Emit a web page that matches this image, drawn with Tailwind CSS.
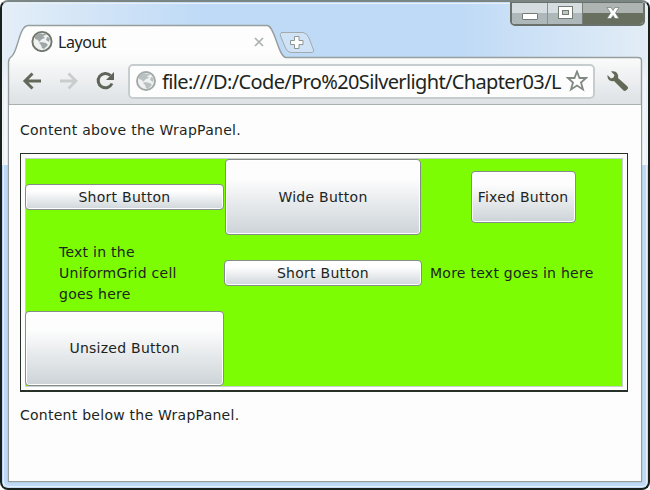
<!DOCTYPE html>
<html lang="en"><head><meta charset="utf-8"><title>Layout</title>
<script src="https://cdn.jsdelivr.net/npm/@tailwindcss/browser@4"></script></head>
<body class="w-[650px] h-[490px] overflow-hidden bg-white">
<div class="relative w-[650px] h-[490px] flex flex-col rounded-[8px] border-2 border-[#18211c] border-t-[#7b8583] bg-[#bfdaf6] overflow-hidden font-['DejaVu_Sans',Verdana,sans-serif] text-[14px] text-[#1c251e] px-[7px] pb-[7px]">
  <svg class="absolute -left-[2px] -top-[2px]" width="650" height="490" viewBox="0 0 650 490" fill="none">
    <defs>
      <linearGradient id="glassL" x1="0" y1="0" x2="1" y2="0"><stop stop-color="#e4eef8"/><stop offset="1" stop-color="#bfdaf6"/></linearGradient>
      <linearGradient id="glassR" x1="0" y1="0" x2="1" y2="0"><stop stop-color="#bfdaf6"/><stop offset="1" stop-color="#e3edf6"/></linearGradient>
      <linearGradient id="side" x1="0" y1="0" x2="0" y2="1"><stop stop-color="#e4edf5"/><stop offset=".2" stop-color="#f0f4f8"/><stop offset="1" stop-color="#f4f7fa"/></linearGradient>
      <linearGradient id="bar" x1="0" y1="26" x2="0" y2="105" gradientUnits="userSpaceOnUse"><stop offset=".35" stop-color="#fdfdfd"/><stop offset="1" stop-color="#dde1e4"/></linearGradient>
    </defs>
    <rect width="200" height="60" fill="url(#glassL)"/>
    <rect x="460" width="190" height="60" fill="url(#glassR)"/>
    <rect y="60" width="9" height="105" fill="url(#side)"/>
    <rect x="641" y="60" width="9" height="105" fill="url(#side)"/>
    <path d="M3.500 488V8Q3.500 3.500 9 3.500H641Q646.500 3.500 646.500 8V482Q646.500 486.500 641 486.500H9Q3.500 486.500 3.500 481" stroke="#e9eff4"/>
    <path d="M8.500 481.500V62Q8.500 58.500 12 56C18 51 19 26 28 25.500H267C275 25.500 278 57 286 57.500H638Q641.500 57.500 641.500 61V481.500Z" fill="url(#bar)" stroke="#979f9e" stroke-width="1.400"/>
    <path d="M281.500 32.500H303Q307 33 309 38L313.500 50Q314.500 52.500 311 52.500H291Q287.500 52.500 285.500 48L280.500 36Q279.500 32.500 283 32.500Z" fill="#cfe2f6" stroke="#a2aaab"/>
    <path d="M294.500 36.500H299V40.500H303V44.500H299V48.500H294.500V44.500H290.500V40.500H294.500Z" fill="#fff" stroke="#8f9796"/>
  </svg>
  <header class="relative flex flex-col h-[103px] shrink-0">
    <div class="flex h-[55px] pt-[28px] pl-[22px]">
      <svg width="22" height="22" viewBox="0 0 22 22"><circle cx="11" cy="11.500" r="9.600" fill="#f0f2f2" stroke="#70776c" stroke-width="1.900"/><path d="M4 6L8 3L12 4L14 3L15 5L12 6L14 8L11 9L8 12L7 10L4 9ZM10 12L15 13L17 15L13 19L11 18L10 15L8 13ZM16 7L19 8L18 12L15 10Z" fill="#9ea7a6"/></svg>
      <span class="ml-[5px] mt-px w-[196px] h-[22px] leading-[22px] text-[16px] tracking-[-0.450px] font-['Noto_Sans',sans-serif]">Layout</span>
      <svg class="mt-[7px]" width="10" height="10" viewBox="0 0 10 10"><path d="M1 1L9 9M9 1L1 9" stroke="#a9b1b1" stroke-width="1.700"/></svg>
    </div>
    <div class="flex items-center h-[48px] shrink-0 pt-px pl-[13px] border-b border-[#a9b0b0]">
      <svg width="20" height="20" viewBox="0 0 20 20" fill="none" stroke="#62695b" stroke-width="3"><path d="M2.500 10H19M10.500 2.500L3 10L10.500 17.500"/></svg>
      <svg class="ml-[17px]" width="20" height="20" viewBox="0 0 20 20" fill="none" stroke="#c8cece" stroke-width="2.800"><path d="M1 10H17.500M9.500 2.500L17 10L9.500 17.500"/></svg>
      <svg class="ml-[16px]" width="20" height="20" viewBox="0 0 20 20" fill="none"><path d="M15.500 4.500A7.200 7.200 0 1 0 17 12.500" stroke="#5e6558" stroke-width="3"/><path d="M19 1V9H11Z" fill="#5e6558"/></svg>
      <div class="ml-[13px] w-[467px] h-[35px] flex items-center border-2 border-[#c6cdcf] rounded-[5px] bg-[#fdfdfd]">
        <svg class="ml-[5px]" width="22" height="22" viewBox="0 0 22 22"><circle cx="11" cy="11" r="9" fill="#f0f2f2" stroke="#a2a9a8" stroke-width="1.900"/><path d="M4 6L8 3L12 4L14 3L15 5L12 6L14 8L11 9L8 12L7 10L4 9ZM10 12L15 13L17 15L13 19L11 18L10 15L8 13ZM16 7L19 8L18 12L15 10Z" fill="#bac1c2"/></svg>
        <span class="ml-[5px] w-[402px] shrink-0 whitespace-nowrap leading-[29px] text-[20px] tracking-[-0.640px] font-['Noto_Sans',sans-serif]">file:///D:/Code/Pro%20Silverlight/Chapter03/L</span>
        <svg class="ml-[2px] shrink-0" width="22" height="22" viewBox="0 0 22 22"><path d="M11 1.500L13.500 8H20L15 12.500L17 19.500L11 15.500L5 19.500L7 12.500L2 8H8.500Z" fill="#fdfdfd" stroke="#818a82" stroke-width="1.800"/></svg>
      </div>
      <svg class="ml-[12px]" width="22" height="22" viewBox="0 0 22 22"><path d="M4 1.500L7.500 5L6.500 7.500L4 8.500L.5 5C0 9 3 12 7 11L16.500 20.500Q18 21.500 19.500 20L21 18.500Q21.500 17 20 16L11 8C12 4 9 0 4 1.500Z" fill="#626957"/></svg>
    </div>
  </header>
  <div class="absolute left-[508px] -top-[1px] w-[135px] h-[25px] flex rounded-b-[5px] border-2 border-[#69716a] overflow-hidden bg-white">
    <div class="w-[36px] flex items-center justify-center border-r border-[#8a928c] bg-linear-to-b from-[#d5dde1] from-50% to-[#aeb8bb] to-50%"><div class="mt-[5px] w-[16px] h-[7px] bg-white border border-[#747b73] rounded-[1px]"></div></div>
    <div class="w-[35px] flex items-center justify-center border-r border-[#777e77] bg-linear-to-b from-[#d5dde1] from-50% to-[#aeb8bb] to-50%"><div class="-mt-[2px] w-[15px] h-[13px] border border-[#747b73] bg-white flex items-center justify-center"><div class="w-[7px] h-[5px] bg-[#bec6c8] border border-[#747b73]"></div></div></div>
    <div class="flex-1 flex items-center justify-center bg-linear-to-b from-[#aeb4b2] from-50% to-[#686f5f] to-50%"><svg class="-mt-[2px]" width="14" height="12" viewBox="0 0 14 12"><path d="M1 .5H5L7 3.500L9 .5H13L9.500 6L13 11.500H9L7 8.500L5 11.500H1L4.500 6Z" fill="#fff" stroke="#747b73" stroke-width=".7"/></svg></div>
  </div>
  <main class="relative flex-1 bg-[#fdfdfd] flex flex-col pl-[11px] pt-[15px] tracking-[0.260px]">
    <p class="h-[33px] leading-[20px] whitespace-nowrap">Content above the WrapPanel.</p>
    <div class="w-[608px] h-[239px] border border-r-[1.500px] border-b-2 border-[#283128] pl-[4px] pt-[4px]">
      <div class="w-[598px] h-[229px] grid grid-cols-[199px_199px_198px] grid-rows-[76px_76px_75px] border border-[#c9cfcd] bg-[#7dfd04]">
        <button class="self-center h-[26px] border border-[#858d89] rounded-[4px] inset-ring inset-ring-white bg-linear-to-b from-white from-25% to-[#cfd6da] -ml-px mr-px">Short Button</button>
        <button class="mr-[3px] border border-[#858d89] rounded-[4px] inset-ring inset-ring-white bg-linear-to-b from-[#fdfdfd] from-25% to-[#ccd3d7]">Wide Button</button>
        <button class="justify-self-center self-center w-[105px] h-[52px] whitespace-nowrap border border-[#858d89] rounded-[4px] inset-ring inset-ring-white bg-linear-to-b from-[#fdfdfd] from-25% to-[#ccd3d7]">Fixed Button</button>
        <p class="pl-[33px] pt-[7px] leading-[21px] whitespace-nowrap">Text in the<br>UniformGrid cell<br>goes here</p>
        <button class="-ml-px mr-[2px] self-center h-[26px] border border-[#858d89] rounded-[4px] inset-ring inset-ring-white bg-linear-to-b from-white from-25% to-[#cfd6da]">Short Button</button>
        <p class="self-center pl-[6px] whitespace-nowrap">More text goes in here</p>
        <button class="-ml-px mr-px border border-[#858d89] rounded-[4px] inset-ring inset-ring-white bg-linear-to-b from-[#fdfdfd] from-25% to-[#ccd3d7]">Unsized Button</button>
      </div>
    </div>
    <p class="mt-[13px] leading-[20px] whitespace-nowrap">Content below the WrapPanel.</p>
  </main>
</div>
</body></html>
